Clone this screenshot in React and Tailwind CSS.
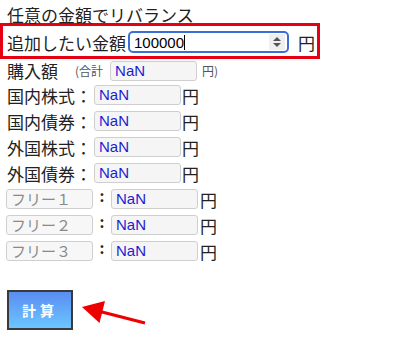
import React from 'react';

const jp = { fontFamily: '"Noto Sans CJK JP", "Noto Sans", sans-serif' };

const NanBox = ({ className = '' }) => (
  <div
    className={`h-[20px] w-[87px] rounded-[3px] border border-[#cfcfcf] bg-[#f5f5f5] pl-[4px] text-[15px] leading-[18px] text-[#1c1cd0] font-['Liberation_Sans',Arial,sans-serif] ${className}`}
  >
    NaN
  </div>
);

const assetRows = ['国内株式：', '国内債券：', '外国株式：', '外国債券：'];
const freeRows = ['フリー１', 'フリー２', 'フリー３'];

export default function App() {
  return (
    <div className="relative h-[338px] w-[400px] overflow-hidden bg-white text-[#222]" style={jp}>
      {/* Title */}
      <div className="h-[23px] pl-[7px] pt-[6px] text-[17px] leading-[17px]">任意の金額でリバランス</div>

      {/* Highlighted input row */}
      <div className="flex h-[36px] w-[320px] items-center border-[3px] border-[#e50012] pl-[4px] pt-[2px]">
        <span className="text-[17px] leading-none">追加したい金額</span>
        <div className="ml-[2px] flex h-[22px] w-[161px] items-center rounded-[5px] border-2 border-[#3a6fd8] bg-white">
          <span className="pl-[4px] text-[15px] leading-none text-black font-['Liberation_Sans',Arial,sans-serif]">100000</span>
          <span className="h-[15px] w-px bg-black" />
          <div className="ml-auto mr-[2px] flex h-[16px] w-[16px] flex-col items-center justify-center gap-[2px] bg-[#efefef]">
            <svg width="8" height="4" viewBox="0 0 8 4"><polygon points="0,4 4,0 8,4" fill="#555" /></svg>
            <svg width="8" height="4" viewBox="0 0 8 4"><polygon points="0,0 8,0 4,4" fill="#555" /></svg>
          </div>
        </div>
        <span className="ml-[9px] text-[17px] leading-none">円</span>
      </div>

      {/* Purchase amount */}
      <div className="flex h-[23px] items-center pl-[7px]">
        <span className="text-[17px] leading-none">購入額</span>
        <span className="ml-[17px] text-[12px] leading-none text-[#555]">(合計</span>
        <NanBox className="ml-[7px] w-[86px]" />
        <span className="ml-[5px] text-[12px] leading-none text-[#555]">円)</span>
      </div>

      {assetRows.map((label) => (
        <div key={label} className="flex h-[26px] items-center pl-[7px]">
          <span className="text-[17px] leading-none">{label}</span>
          <NanBox className="ml-[2px]" />
          <span className="ml-px text-[17px] leading-none">円</span>
        </div>
      ))}

      {freeRows.map((label) => (
        <div key={label} className="flex h-[26px] items-center pl-[6px]">
          <div className="h-[20px] w-[87px] rounded-[3px] border border-[#cfcfcf] bg-[#f7f7f7] pl-[4px] text-[15px] leading-[18px] text-[#8a8a8a]">
            {label}
          </div>
          <span className="w-[18px] self-start pt-[2px] text-center text-[15px] font-bold leading-none">:</span>
          <NanBox className="w-[86px]" />
          <span className="ml-[2px] text-[17px] leading-none">円</span>
        </div>
      ))}

      {/* Calculate button */}
      <div className="mt-[26px] pl-[7px]">
        <button className="flex h-[40px] w-[66px] items-center justify-center border-2 border-[#3a3a3a] bg-gradient-to-b from-[#5a8cf2] to-[#6bc6ff] text-[14px] font-bold tracking-[4px] text-white">
          計算
        </button>
      </div>

      {/* Annotation arrow */}
      <svg className="pointer-events-none absolute left-0 top-0" width="400" height="338" viewBox="0 0 400 338">
        <line x1="145" y1="323" x2="100" y2="311.5" stroke="#ee0000" strokeWidth="3" />
        <polygon points="82,307 105,301 99.5,323" fill="#ee0000" />
      </svg>
    </div>
  );
}
